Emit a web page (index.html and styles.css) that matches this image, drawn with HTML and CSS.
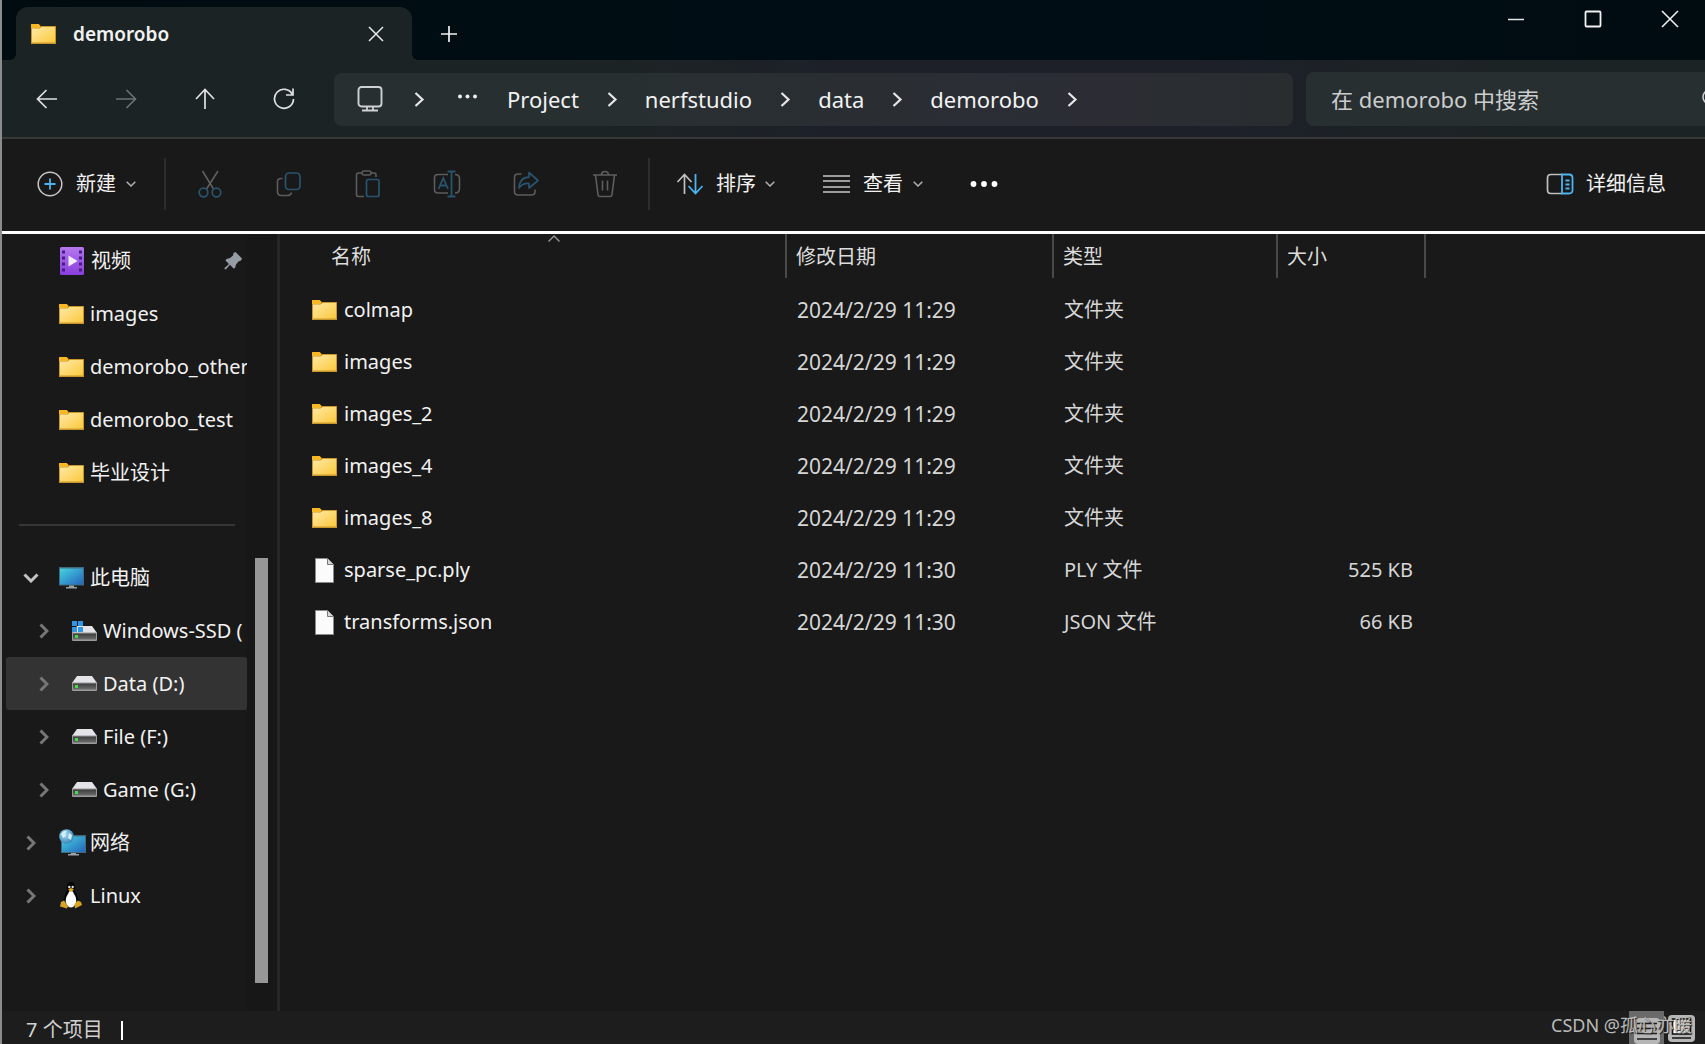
FILE: index.html
```html
<!DOCTYPE html>
<html lang="zh-CN">
<head>
<meta charset="utf-8">
<title>demorobo</title>
<link rel="stylesheet" href="styles.css">
</head>
<body>
<svg class="defs" aria-hidden="true">
  <defs>
    <linearGradient id="gFolder" x1="0" y1="0" x2="1" y2="1"><stop offset="0" stop-color="#ffe9a6"/><stop offset="1" stop-color="#fbc93d"/></linearGradient>
    <linearGradient id="gScreen" x1="0" y1="0" x2="1" y2="1"><stop offset="0" stop-color="#46d3e0"/><stop offset="1" stop-color="#2465bd"/></linearGradient>
    <linearGradient id="gVideo" x1="0" y1="0" x2="0" y2="1"><stop offset="0" stop-color="#b478ee"/><stop offset="1" stop-color="#8a3edc"/></linearGradient>
    <linearGradient id="gDrive" x1="0" y1="0" x2="0" y2="1"><stop offset="0" stop-color="#3c3c3c"/><stop offset="1" stop-color="#6c6c6c"/></linearGradient>
    <radialGradient id="gGlobe" cx=".4" cy=".35" r=".7"><stop offset="0" stop-color="#a8dcf2"/><stop offset="1" stop-color="#3182b4"/></radialGradient>
  </defs>
  <symbol id="folder" viewBox="0 0 25 20"><path d="M0 1Q0 0 1 0H7.500L9.500 2V8H0z" fill="#f2ab1c"/><path d="M0 4H8L10 2H24.500Q25 2 25 3V20H0z" fill="#c8962a"/><path d="M1 4.500H8.500L10.500 3H24V18.500H1z" fill="url(#gFolder)"/><path d="M0 1Q0 0 1 0H7.500L9.500 2 8 4H0z" fill="#f8b724"/></symbol>
  <symbol id="file" viewBox="0 0 19 25"><path d="M.5.500H12.500L18.500 6.500V24.500H.500z" fill="#fbfbfb" stroke="#8b8b8b"/><path d="M12.500.500V6.500H18.500" fill="#d8d8d8" stroke="#777"/></symbol>
  <symbol id="drive" viewBox="0 0 25 15"><path d="M5 0H20L25 7H0z" fill="#e3e3e8"/><path d="M0 6.500H25V14Q25 15 24 15H1Q0 15 0 14z" fill="#9a9a9c"/><rect x="1" y="7.500" width="23" height="6" fill="url(#gDrive)"/><rect x="3" y="9" width="3" height="3" fill="#3fdc4b"/></symbol>
  <symbol id="chev" viewBox="0 0 10 16"><path d="M1.500 1.500 8 8 1.500 14.500" fill="none" stroke="currentColor" stroke-width="3"/></symbol>
  <symbol id="thin" viewBox="0 0 20 16"><path d="M6.500 2 13.500 8.500 6.500 15" fill="none" stroke="currentColor" stroke-width="2.200"/></symbol>
  <symbol id="down" viewBox="0 0 10 6"><path d="M.7.700 5 5 9.300.700" fill="none" stroke="currentColor" stroke-width="1.500"/></symbol>
</svg>

<header class="titlebar">
  <div class="tab">
    <svg class="ic-folder" aria-hidden="true"><use href="#folder"/></svg>
    <span class="tab-title">demorobo</span>
    <button class="plain tab-close" aria-label="关闭标签页"><svg width="16" height="16" viewBox="0 0 16 16"><path d="M1 1 15 15M15 1 1 15" stroke="#e8eaea" stroke-width="1.500"/></svg></button>
  </div>
  <button class="plain tab-new" aria-label="新建标签页"><svg width="18" height="18" viewBox="0 0 18 18"><path d="M9 1V17M1 9H17" stroke="#f2f2f2" stroke-width="1.700"/></svg></button>
  <div class="window-controls">
    <button class="plain" aria-label="最小化"><svg width="18" height="18" viewBox="0 0 18 18"><path d="M1 9.500H17" stroke="#e6e6e6" stroke-width="1.500"/></svg></button>
    <button class="plain" aria-label="最大化"><svg width="18" height="18" viewBox="0 0 18 18"><rect x="1.500" y="1.500" width="15" height="15" rx="1" fill="none" stroke="#f2f2f2" stroke-width="1.800"/></svg></button>
    <button class="plain" aria-label="关闭"><svg width="18" height="18" viewBox="0 0 18 18"><path d="M1 1 17 17M17 1 1 17" stroke="#f0f0f0" stroke-width="1.600"/></svg></button>
  </div>
</header>

<nav class="navbar">
  <button class="plain nav-btn" aria-label="后退"><svg width="22" height="20" viewBox="0 0 22 20"><path d="M21 10H2M10.500 1 1.500 10 10.500 19" fill="none" stroke="#e0e2e2" stroke-width="1.700"/></svg></button>
  <button class="plain nav-btn" aria-label="前进" disabled><svg width="22" height="20" viewBox="0 0 22 20"><path d="M1 10H20M11.500 1 20.500 10 11.500 19" fill="none" stroke="#6c7172" stroke-width="1.700"/></svg></button>
  <button class="plain nav-btn" aria-label="向上"><svg width="20" height="22" viewBox="0 0 20 22"><path d="M10 21V2M1 11 10 1.500 19 11" fill="none" stroke="#e0e2e2" stroke-width="1.700"/></svg></button>
  <button class="plain nav-btn" aria-label="刷新"><svg width="22" height="22" viewBox="0 0 22 22"><path d="M19.500 6.500A9.500 9.500 0 1 0 20.500 11M20 .500V7H13" fill="none" stroke="#e0e2e2" stroke-width="1.700"/></svg></button>
  <div class="address">
    <svg class="ic-monitor" viewBox="0 0 26 26" aria-hidden="true"><rect x="1.500" y="1" width="23" height="19.500" rx="3" fill="none" stroke="#cfd2d2" stroke-width="1.900"/><path d="M10 21V24M16 21V24M5 24.500H21" stroke="#cfd2d2" stroke-width="1.800"/></svg>
    <svg class="ic-thin lead"><use href="#thin"/></svg>
    <button class="plain lead" aria-label="更多位置"><svg width="26" height="16" viewBox="0 0 26 16"><g fill="#eee"><circle cx="5" cy="5.500" r="2"/><circle cx="12.500" cy="5.500" r="2"/><circle cx="20" cy="5.500" r="2"/></g></svg></button>
    <a class="lead" href="#project">Project</a>
    <svg class="ic-thin"><use href="#thin"/></svg>
    <a href="#nerfstudio">nerfstudio</a>
    <svg class="ic-thin"><use href="#thin"/></svg>
    <a href="#data">data</a>
    <svg class="ic-thin"><use href="#thin"/></svg>
    <a href="#demorobo">demorobo</a>
    <svg class="ic-thin"><use href="#thin"/></svg>
  </div>
  <div class="search">
    <input type="text" aria-label="搜索" placeholder="在 demorobo 中搜索">
    <svg class="ic-search" viewBox="0 0 20 20" aria-hidden="true"><circle cx="8" cy="8" r="7" fill="none" stroke="#d0d0d0" stroke-width="1.600"/><path d="M13 13 19 19" stroke="#d0d0d0" stroke-width="1.600"/></svg>
  </div>
</nav>

<div class="commands">
  <button class="plain cmd cmd-create"><svg width="26" height="26" viewBox="0 0 26 26"><circle cx="13" cy="13" r="11.800" fill="none" stroke="#c6c6c6" stroke-width="1.500"/><path d="M13 7.500V18.500M7.500 13H18.500" stroke="#4cb4f0" stroke-width="1.800"/></svg>新建<svg class="ic-down"><use href="#down"/></svg></button>
  <span class="divider"></span>
  <button class="plain tool" aria-label="剪切" disabled><svg width="24" height="28" viewBox="0 0 24 28"><path d="M4.500 1 15.500 19M20 1 8.500 19" stroke="#626262" stroke-width="1.500"/><g fill="none" stroke="#28546e" stroke-width="1.700"><circle cx="5.500" cy="22.500" r="4.300"/><circle cx="18.500" cy="22.500" r="4.300"/></g></svg></button>
  <button class="plain tool" aria-label="复制" disabled><svg width="26" height="26" viewBox="0 0 26 26"><path d="M6.500 7.500H5Q1.500 7.500 1.500 11V20.500Q1.500 24.500 5.500 24.500H11Q15 24.500 15.500 21.500" fill="none" stroke="#5c5c5c" stroke-width="1.600"/><rect x="9.500" y="2" width="14.500" height="16.500" rx="3.500" fill="none" stroke="#28546e" stroke-width="1.700"/></svg></button>
  <button class="plain tool" aria-label="粘贴" disabled><svg width="26" height="28" viewBox="0 0 26 28"><path d="M7 3H3.500Q1.500 3 1.500 5V24.500Q1.500 26.500 3.500 26.500H9M15.500 3H19Q21 3 21 5V7" fill="none" stroke="#5c5c5c" stroke-width="1.600"/><rect x="7" y="1" width="9" height="4" rx="2" fill="none" stroke="#5c5c5c" stroke-width="1.500"/><rect x="11.500" y="9.500" width="12.500" height="17" rx="2" fill="none" stroke="#28546e" stroke-width="1.700"/></svg></button>
  <button class="plain tool" aria-label="重命名" disabled><svg width="28" height="28" viewBox="0 0 28 28"><path d="M15 4.500H5Q1.500 4.500 1.500 8V19.500Q1.500 23 5 23H15M22 4.500Q26.500 4.500 26.500 9V18.500Q26.500 23 22 23" fill="none" stroke="#5c5c5c" stroke-width="1.600"/><path d="M14.500 1.500H22.500M14.500 26.500H22.500M18.500 1.500V26.500M5.500 19 10.300 8 15 19M7 15.500H13.500" fill="none" stroke="#28546e" stroke-width="1.800"/></svg></button>
  <button class="plain tool" aria-label="共享" disabled><svg width="26" height="26" viewBox="0 0 26 26"><path d="M8.500 3H5Q1.500 3 1.500 6.500V20.500Q1.500 24 5 24H18.500Q22 24 22 20.500V18.500" fill="none" stroke="#5c5c5c" stroke-width="1.600"/><path d="M16 1.500 25 9.500 16 17V12.500Q9.500 12 6 17Q6.500 6.500 16 6.200z" fill="none" stroke="#28546e" stroke-width="1.700" stroke-linejoin="round"/></svg></button>
  <button class="plain tool" aria-label="删除" disabled><svg width="26" height="28" viewBox="0 0 26 28"><path d="M1 5H25M3.500 5 6 24.500Q6.200 26.500 8 26.500H18Q19.800 26.500 20 24.500L22.500 5M9.500 5Q9.500 1.500 13 1.500T16.500 5M10.500 10.500V20.500M15.500 10.500V20.500" fill="none" stroke="#5e5e5e" stroke-width="1.600"/></svg></button>
  <span class="divider"></span>
  <button class="plain cmd cmd-sort"><svg width="28" height="22" viewBox="0 0 28 22"><path d="M8.500 21V2M1.500 9 8.500 1.500 15.500 9" fill="none" stroke="#c0c0c0" stroke-width="1.700"/><path d="M19.500 1V20M12.500 13 19.500 20.500 26.500 13" fill="none" stroke="#4cb4f0" stroke-width="1.800"/></svg>排序<svg class="ic-down"><use href="#down"/></svg></button>
  <button class="plain cmd cmd-view"><svg width="27" height="20" viewBox="0 0 27 20"><path d="M0 2H27M0 7H27M0 13H27M0 18H27" stroke="#c8c8c8" stroke-width="1.700"/></svg>查看<svg class="ic-down"><use href="#down"/></svg></button>
  <button class="plain cmd-more" aria-label="查看更多"><svg width="28" height="8" viewBox="0 0 28 8"><g fill="#fff"><circle cx="3.500" cy="4" r="2.900"/><circle cx="14" cy="4" r="2.900"/><circle cx="24.500" cy="4" r="2.900"/></g></svg></button>
  <button class="plain cmd cmd-details"><svg width="28" height="22" viewBox="0 0 28 22"><path d="M16 1.500H5Q1.500 1.500 1.500 5V17Q1.500 20.500 5 20.500H16" fill="none" stroke="#c0c0c0" stroke-width="1.700"/><path d="M16 1.500H23Q26.500 1.500 26.500 5V17Q26.500 20.500 23 20.500H16zM19.500 7.500H23.500M19.500 11.500H23.500M19.500 15.500H23.500" fill="none" stroke="#4cb4f0" stroke-width="1.800"/></svg>详细信息</button>
</div>

<main class="body">
  <aside class="sidebar">
    <div class="tree">
      <a class="row" href="#video"><svg class="ic-video" viewBox="0 0 24 28"><rect width="24" height="28" rx="1.500" fill="url(#gVideo)"/><g fill="#431c85"><path d="M2 3.500h3v3H2zM2 9.500h3v3H2zM2 15.500h3v3H2zM2 21.500h3v3H2zM19 3.500h3v3h-3zM19 9.500h3v3h-3zM19 15.500h3v3h-3zM19 21.500h3v3h-3z"/></g><path d="M8.500 8.500 17.500 14 8.500 19.500z" fill="#f3edf9"/></svg><span class="label">视频</span><svg class="ic-pin" viewBox="0 0 18 18"><path d="M11.500 0 18 6.500 17 8.500 14.500 9.500 12 12.500 11 16 9.500 16.500 6 12.800 1.800 17.500.5 17 .5 16 5 12 1.500 8.500 2.500 7 6 6 9 3.500 9.500 1z" fill="#969ca3"/></svg></a>
      <a class="row" href="#images"><svg class="ic-folder"><use href="#folder"/></svg><span class="label">images</span></a>
      <a class="row" href="#other"><svg class="ic-folder"><use href="#folder"/></svg><span class="label">demorobo_other</span></a>
      <a class="row" href="#test"><svg class="ic-folder"><use href="#folder"/></svg><span class="label">demorobo_test</span></a>
      <a class="row" href="#design"><svg class="ic-folder"><use href="#folder"/></svg><span class="label">毕业设计</span></a>
      <hr class="separator">
      <a class="row root" href="#pc"><svg class="ic-open" viewBox="0 0 16 10"><path d="M1.500 1.500 8 8 14.500 1.500" fill="none" stroke="#c4c4c4" stroke-width="3"/></svg><svg class="ic-pc" viewBox="0 0 25 22"><rect width="25" height="18.500" fill="#42697c"/><rect x="1" y="1.500" width="23" height="16" fill="url(#gScreen)"/><path d="M10 18.500H15V20H18V21.500H7V20H10z" fill="#9aa3a8"/></svg><span class="label">此电脑</span></a>
      <a class="row child" href="#c"><svg class="ic-chev"><use href="#chev"/></svg><svg class="ic-windrive" viewBox="0 0 25 20"><path d="M5 5H20L25 12H0z" fill="#e3e3e8"/><path d="M0 11.500H25V19Q25 20 24 20H1Q0 20 0 19z" fill="#9a9a9c"/><rect x="1" y="12.500" width="23" height="6" fill="url(#gDrive)"/><rect x="3" y="14" width="3" height="3" fill="#3fdc4b"/><path d="M0 0H5V5H0zM6 0H11V5H6zM0 6H5V11H0zM6 6H11V11H6z" fill="#3196e4"/></svg><span class="label">Windows-SSD (</span></a>
      <a class="row child selected" href="#d"><svg class="ic-chev"><use href="#chev"/></svg><svg class="ic-drive"><use href="#drive"/></svg><span class="label">Data (D:)</span></a>
      <a class="row child" href="#f"><svg class="ic-chev"><use href="#chev"/></svg><svg class="ic-drive"><use href="#drive"/></svg><span class="label">File (F:)</span></a>
      <a class="row child" href="#g"><svg class="ic-chev"><use href="#chev"/></svg><svg class="ic-drive"><use href="#drive"/></svg><span class="label">Game (G:)</span></a>
      <a class="row root" href="#net"><svg class="ic-chev"><use href="#chev"/></svg><svg class="ic-net" viewBox="0 0 27 27"><rect x="2" y="6" width="25" height="18" fill="#42697c"/><rect x="3" y="7.500" width="23" height="15.500" fill="url(#gScreen)"/><path d="M12 24H17V25H20V26.500H9V25H12z" fill="#9aa3a8"/><circle cx="7.500" cy="7.500" r="7.300" fill="url(#gGlobe)"/><path d="M2 5Q5 1 8 2L6 5 7 7 4 9zM10 4 13 6 12 11 9 9z" fill="#d5effa"/></svg><span class="label">网络</span></a>
      <a class="row root" href="#linux"><svg class="ic-chev"><use href="#chev"/></svg><svg class="ic-tux" viewBox="0 0 22 27"><path d="M11 0Q7 0 7 5 7.500 9 5 13 2.500 18 4 22L11 26 18 22Q19.500 18 17 13 14.500 9 15 5 15 0 11 0z" fill="#050505"/><path d="M11 8Q9 9 8 12 5 16 6 21 8 25.500 11 25.500T16 21Q17 16 14 12 13 9 11 8z" fill="#fff"/><circle cx="9.300" cy="5" r="1.200" fill="#ddd"/><circle cx="12.700" cy="5" r="1.200" fill="#ddd"/><path d="M8 7.500 11 6 14 7.500 11 10z" fill="#e4a91f"/><path d="M1 20 4 18.500 8 24 7 26.500 0 24.500zM21 20 18 18.500 14.500 22 15 26.500 22 23z" fill="#d9a423"/></svg><span class="label">Linux</span></a>
    </div>
    <div class="scroll"><div class="thumb"></div></div>
  </aside>
  <section class="files">
    <table>
      <colgroup><col class="c-name"><col class="c-date"><col class="c-type"><col class="c-size"></colgroup>
      <thead><tr>
        <th><svg class="ic-sorted" viewBox="0 0 12 7"><path d="M.5 6.500 6 1 11.500 6.500" fill="none" stroke="#9a9a9a" stroke-width="1.400"/></svg>名称</th>
        <th>修改日期</th><th>类型</th><th>大小</th>
      </tr></thead>
      <tbody>
        <tr><td><span class="name"><svg class="ic-folder"><use href="#folder"/></svg>colmap</span></td><td class="num">2024/2/29 11:29</td><td>文件夹</td><td></td></tr>
        <tr><td><span class="name"><svg class="ic-folder"><use href="#folder"/></svg>images</span></td><td class="num">2024/2/29 11:29</td><td>文件夹</td><td></td></tr>
        <tr><td><span class="name"><svg class="ic-folder"><use href="#folder"/></svg>images_2</span></td><td class="num">2024/2/29 11:29</td><td>文件夹</td><td></td></tr>
        <tr><td><span class="name"><svg class="ic-folder"><use href="#folder"/></svg>images_4</span></td><td class="num">2024/2/29 11:29</td><td>文件夹</td><td></td></tr>
        <tr><td><span class="name"><svg class="ic-folder"><use href="#folder"/></svg>images_8</span></td><td class="num">2024/2/29 11:29</td><td>文件夹</td><td></td></tr>
        <tr><td><span class="name"><svg class="ic-file"><use href="#file"/></svg>sparse_pc.ply</span></td><td class="num">2024/2/29 11:30</td><td>PLY 文件</td><td class="size">525 KB</td></tr>
        <tr><td><span class="name"><svg class="ic-file"><use href="#file"/></svg>transforms.json</span></td><td class="num">2024/2/29 11:30</td><td>JSON 文件</td><td class="size">66 KB</td></tr>
      </tbody>
    </table>
  </section>
</main>

<footer class="status">
  <span>7 个项目</span><span class="bar"></span>
  <div class="views">
    <button class="plain view selected" aria-label="详细信息视图"><svg width="26" height="26" viewBox="0 0 26 26"><rect width="26" height="26" rx="4" fill="#b6b6b6"/><path d="M3 5.500H23M3 10.500H23M3 15.500H23M3 21H23" stroke="#1c1c1c" stroke-width="1.600"/></svg></button>
    <button class="plain view" aria-label="大图标视图"><svg width="27" height="27" viewBox="0 0 27 27"><rect width="27" height="27" rx="4" fill="#b6b6b6"/><rect x="4.500" y="4" width="18" height="15" fill="#fff" stroke="#161616" stroke-width="1.600"/><path d="M4 23H23" stroke="#1c1c1c" stroke-width="1.600"/></svg></button>
  </div>
  <span class="watermark">CSDN @孤心亦暖</span>
</footer>
</body>
</html>
```

FILE: styles.css
```css
* { box-sizing: border-box; }

body {
  margin: 0;
  height: 100vh;
  display: flex;
  flex-direction: column;
  overflow: hidden;
  border-left: 2px solid #8c8c8c;
  background: #191919;
  color: #f2f2f2;
  font: 20px/26px "Noto Sans", "Noto Sans CJK SC", sans-serif;
}

svg { display: block; flex: none; }
.defs { position: absolute; width: 0; height: 0; }
a { color: inherit; text-decoration: none; }

.plain {
  display: flex;
  align-items: center;
  justify-content: center;
  padding: 0;
  border: 0;
  background: none;
  color: inherit;
  font: inherit;
}

.ic-folder { width: 25px; height: 20px; }
.ic-file { width: 19px; height: 25px; margin: 0 3px; }
.ic-drive { width: 25px; height: 15px; }
.ic-windrive { width: 25px; height: 20px; }
.ic-chev { width: 10px; height: 16px; color: #777; }
.ic-thin { width: 20px; height: 16px; color: #e8e8e8; }
.ic-down { width: 10px; height: 6px; color: #b0b0b0; }
.ic-open { width: 16px; height: 10px; }
.ic-video { width: 24px; height: 28px; }
.ic-pin { width: 18px; height: 18px; }
.ic-pc { width: 25px; height: 22px; }
.ic-net { width: 27px; height: 27px; }
.ic-tux { width: 22px; height: 27px; }
.ic-monitor { width: 26px; height: 26px; }

/* Title bar */
.titlebar {
  display: flex;
  flex: none;
  height: 60px;
  padding-left: 14px;
  background: linear-gradient(90deg, #000c10, #000d15 60%, #000c10);
}

.tab {
  position: relative;
  display: flex;
  align-items: center;
  width: 396px;
  margin-top: 7px;
  padding: 0 28px 0 15px;
  border-radius: 12px 12px 0 0;
  background: #1c2324;
}

.tab::before,
.tab::after {
  content: "";
  position: absolute;
  bottom: 0;
  width: 6px;
  height: 6px;
}
.tab::before { left: -6px; background: radial-gradient(circle at 0 0, transparent 6px, #1c2324 6px); }
.tab::after { right: -6px; background: radial-gradient(circle at 100% 0, transparent 6px, #1c2324 6px); }

.tab-title { flex: 1; margin-left: 17px; font-size: 19px; font-weight: 600; }
.tab-new { width: 74px; padding-top: 8px; }

.window-controls { display: flex; gap: 7px; margin-left: auto; height: 37px; }
.window-controls button { width: 70px; }

/* Navigation */
.navbar {
  display: flex;
  flex: none;
  align-items: center;
  height: 79px;
  padding: 1px 0 0 5px;
  border-bottom: 2px solid #383838;
  background: linear-gradient(90deg, #1c2324 35%, #1d2029 50%, #1d2029 70%, #1c2324 90%);
}

.nav-btn { width: 79px; height: 53px; }

.address {
  display: flex;
  flex: 1;
  align-items: center;
  gap: 23px;
  height: 53px;
  margin: 0 13px 0 11px;
  padding-left: 23px;
  border-radius: 8px;
  background: linear-gradient(90deg, #282f31 30%, #2b2d34 75%, #292d30);
  font-size: 22px;
}
.lead { margin-left: 3px; }

.search {
  display: flex;
  align-items: center;
  width: 399px;
  height: 54px;
  border-radius: 8px 0 0 8px;
  background: #282f31;
  overflow: hidden;
}

.search input {
  flex: 1;
  min-width: 0;
  height: 54px;
  padding: 0 0 0 25px;
  border: 0;
  outline: 0;
  background: none;
  color: #fff;
  font: inherit;
  font-size: 22px;
}
.search input::placeholder { color: #cbcdcd; opacity: 1; }
.ic-search { width: 20px; height: 20px; margin-right: -17px; }

/* Command bar */
.commands {
  display: flex;
  flex: none;
  align-items: center;
  height: 95px;
  padding: 0 39px 2px 35px;
  border-bottom: 3px solid #fff;
}

.divider { width: 2px; height: 52px; margin: 0 4px; background: #2d2d2d; }
.tool { width: 79px; height: 52px; }
.cmd { height: 52px; }
.cmd-create { gap: 13px; margin-right: 24px; }
.cmd-create .ic-down, .cmd-sort .ic-down, .cmd-view .ic-down { margin-left: -3px; }
.cmd-sort { gap: 12px; margin: 0 48px 0 22px; }
.cmd-view { gap: 13px; margin-right: 47px; }
.cmd-details { gap: 12px; margin-left: auto; }

/* Body */
.body { display: flex; flex: 1; min-height: 0; }

.sidebar {
  display: flex;
  flex: none;
  width: 278px;
  border-right: 3px solid #272727;
}

.tree { width: 245px; padding-left: 4px; overflow: hidden; }

.row {
  display: flex;
  align-items: center;
  gap: 6px;
  height: 53px;
  padding-left: 53px;
  white-space: nowrap;
}
.row .label { flex: 1; min-width: 0; overflow: hidden; }
.row.root { padding-left: 20px; }
.row.child { padding-left: 33px; }
.root .ic-chev,
.child .ic-chev { margin-right: 17px; }
.root .ic-open { margin: 0 14px 0 -3px; }
.root .ic-net { margin-right: -2px; }
.root .ic-tux { margin: 0 2px 0 1px; }
.row .ic-video { margin: 0 1px 0 1px; }
.row .ic-pin { margin-right: 5px; }
.selected.row { border-radius: 3px; background: #333; }

.separator {
  height: 2px;
  margin: 25px 12px 25px 13px;
  border: 0;
  background: #363636;
}

.scroll { flex: 1; padding: 324px 9px 28px 8px; background: #171717; }
.thumb { height: 100%; background: #979797; }

table { width: 1145px; table-layout: fixed; border-collapse: collapse; }
.c-name { width: 506px; }
.c-date { width: 267px; }
.c-type { width: 224px; }
.c-size { width: 148px; }

th {
  position: relative;
  height: 44px;
  padding: 2px 0 0 9px;
  border-right: 2px solid #494949;
  color: #dcdcdc;
  font-weight: 400;
  text-align: left;
}
th:first-child { padding-left: 51px; }

/* sort direction mark over the column title */
.ic-sorted { position: absolute; top: 1px; left: 50%; width: 12px; height: 7px; margin-left: 15px; }

tbody::before { content: ""; display: block; height: 6px; }
td { height: 52px; padding: 0 0 0 11px; color: #d6d6d6; white-space: nowrap; }
td:first-child { padding-left: 32px; color: #f2f2f2; }
.name { display: flex; align-items: center; gap: 7px; }
.num { font-size: 21px; }
.size { padding-right: 12px; text-align: right; }

/* Status bar */
.status {
  position: relative;
  display: flex;
  flex: none;
  align-items: center;
  height: 33px;
  padding: 5px 9px 0 24px;
  background: #1d1d1d;
  color: #d0d0d0;
}
.bar { width: 2px; height: 19px; margin-left: 18px; background: #fff; }
.views { display: flex; gap: 2px; margin: -5px 0 0 auto; height: 33px; }
.view { width: 30px; padding-top: 2px; }
.view.selected { width: 35px; padding-top: 7px; background: #6a6a6a; }

.watermark {
  position: absolute;
  right: 13px;
  top: 1px;
  color: #b9b9b9;
  font-size: 18px;
  text-shadow: 1px 1px 1px #222;
}
```
